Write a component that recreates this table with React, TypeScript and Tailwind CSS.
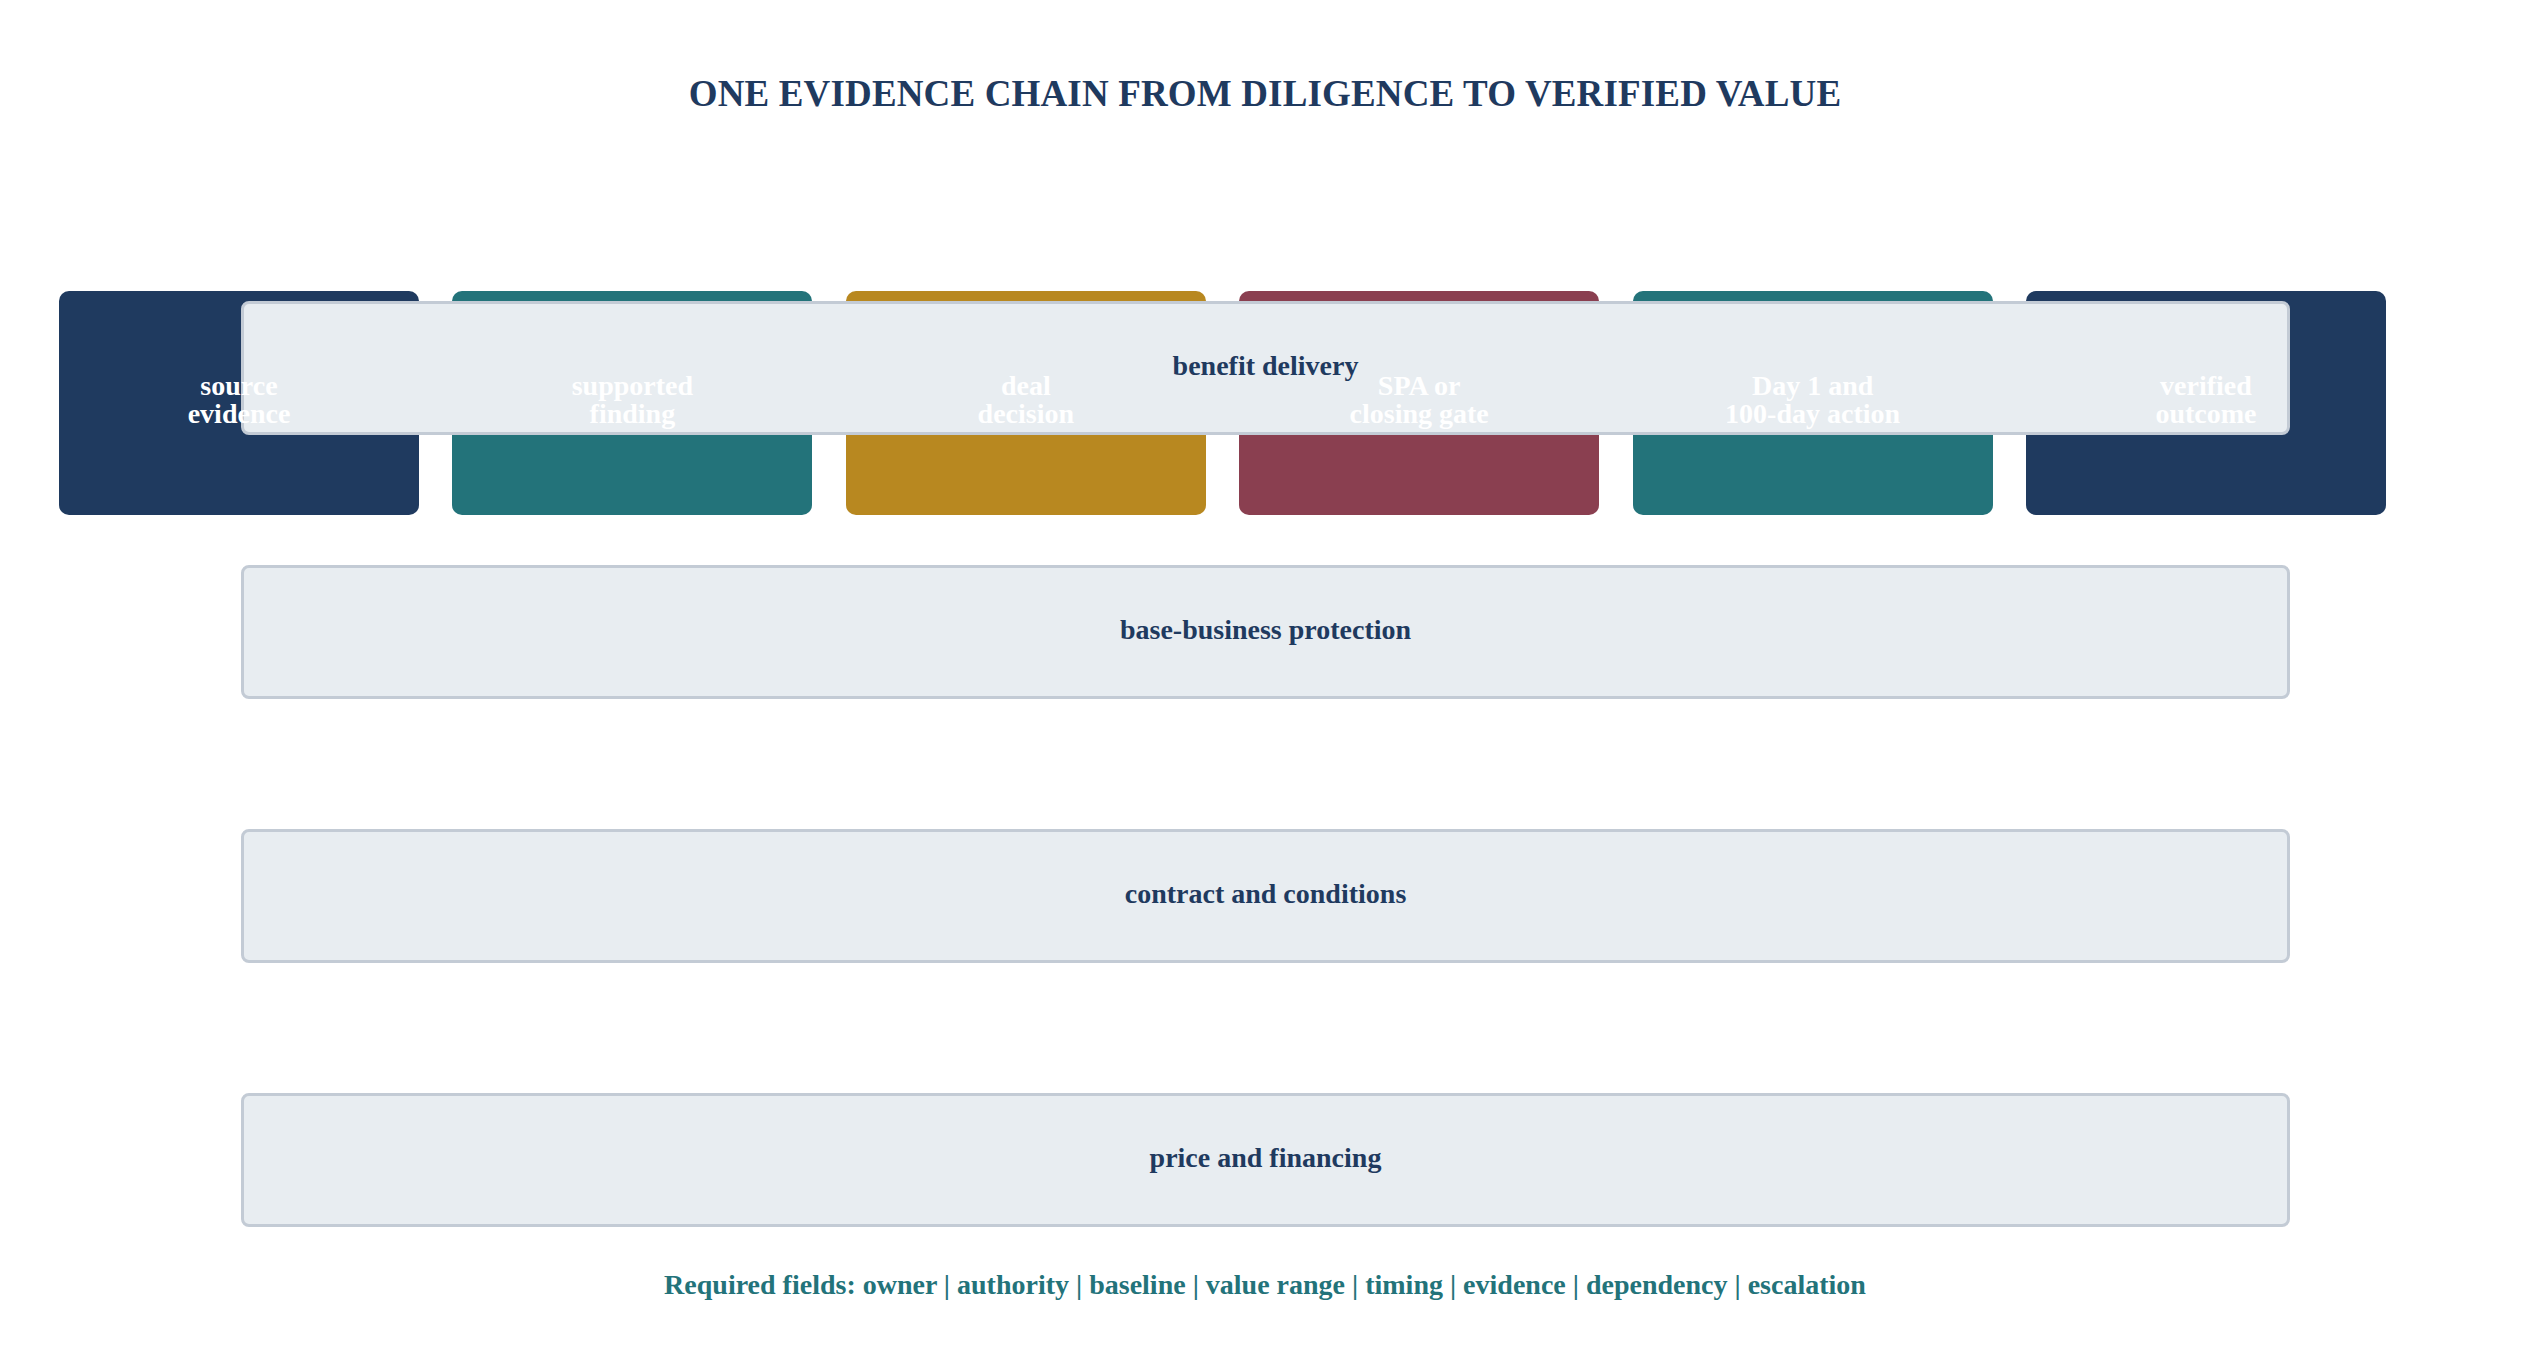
import React from 'react';

const steps = [
    { label: ['source', 'evidence'], color: 'bg-[#1f3a5f]' },
    { label: ['supported', 'finding'], color: 'bg-[#23737a]' },
    { label: ['deal', 'decision'], color: 'bg-[#b88820]' },
    { label: ['SPA or', 'closing gate'], color: 'bg-[#8a3f50]' },
    { label: ['Day 1 and', '100-day action'], color: 'bg-[#23737a]' },
    { label: ['verified', 'outcome'], color: 'bg-[#1f3a5f]' },
];

const lanes = ['benefit delivery', 'base-business protection', 'contract and conditions', 'price and financing'];

const App = () => {
    return (
        <div className="w-[2530px] h-[1364px] bg-white overflow-hidden font-['Liberation_Serif',_'Times_New_Roman',_serif] font-bold">
            <h1 className="pt-[72px] text-center text-[37px] leading-[44px] tracking-[0.15px] text-[#1f3a5f]">
                ONE EVIDENCE CHAIN FROM DILIGENCE TO VERIFIED VALUE
            </h1>

            {/* chain of steps */}
            <div className="mt-[175px] ml-[59px] w-[2327px] grid grid-cols-6 gap-[33.4px]">
                {steps.map((s) => (
                    <div
                        key={s.label[0]}
                        className={`${s.color} h-[224px] rounded-[10px] flex items-center justify-center pb-[7px]`}
                    >
                        <span className="relative z-20 text-center text-white text-[28px] leading-[28px]">
                            {s.label[0]}
                            <br />
                            {s.label[1]}
                        </span>
                    </div>
                ))}
            </div>

            {/* lanes */}
            <div className="-mt-[214px] ml-[241px] w-[2049px] flex flex-col gap-[130px]">
                {lanes.map((l) => (
                    <div
                        key={l}
                        className="relative z-10 h-[134px] rounded-[8px] border-[3px] border-[#c3cbd5] bg-[#e8edf1] flex items-center justify-center pb-[5px]"
                    >
                        <span className="text-[28px] leading-[28px] text-[#1f3a5f]">{l}</span>
                    </div>
                ))}
            </div>

            <p className="mt-[44px] text-center text-[28px] leading-[28px] text-[#23737a]">
                Required fields: owner | authority | baseline | value range | timing | evidence | dependency | escalation
            </p>
        </div>
    );
};

export default App;
